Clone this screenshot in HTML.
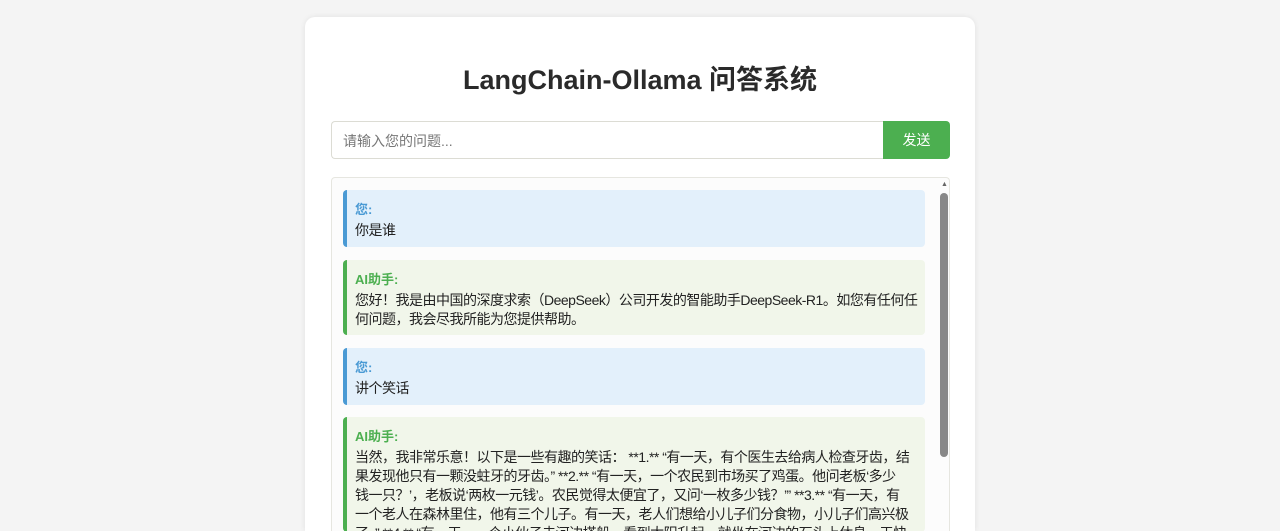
<!DOCTYPE html>
<html><head><meta charset="utf-8"><style>
*{box-sizing:border-box;margin:0;padding:0}
html,body{width:1280px;height:531px;overflow:hidden}
body{position:relative;background:#f4f4f4;font-family:"Liberation Sans","Noto Sans CJK SC",sans-serif;color:#222}
.card{position:absolute;left:305px;top:17px;width:670px;height:514px;background:#fff;border-radius:10px 10px 0 0;box-shadow:0 0 6px rgba(0,0,0,.08);overflow:hidden}
h1{position:absolute;left:0;right:0;top:45px;text-align:center;font-size:27px;font-weight:bold;color:#2a2a2a;line-height:36px}
.inp{position:absolute;left:26px;top:104px;width:553px;height:38px;border:1px solid #dcdcd4;border-right:none;border-radius:4px 0 0 4px;font-size:14px;color:#777;padding:9px 11px}
.btn{position:absolute;left:578px;top:104px;width:67px;height:38px;background:#4caf50;color:#fff;border-radius:0 4px 4px 0;font-size:14px;text-align:center;line-height:38px}
.chat{position:absolute;left:26px;top:160px;width:619px;height:354px;border:1px solid #e6e6e0;border-bottom:none;border-radius:4px 4px 0 0;background:#fcfcfc;overflow:hidden}
.msg{position:absolute;left:11px;width:582px;border-radius:4px;padding:9px 6px 0 8px;font-size:14px;line-height:19px;letter-spacing:-0.5px;white-space:nowrap;overflow:hidden}
.u{background:#e3f0fb;border-left:4px solid #4a9ad4}
.a{background:#f1f6ea;border-left:4px solid #4caf50}
.lab{font-size:13px;font-weight:bold;line-height:22px;letter-spacing:0}
.u .lab{color:#4a9ad4}.a .lab{color:#4caf50}
.sb{position:absolute;left:608px;top:15px;width:8px;height:264px;background:#888;border-radius:4px}
.arr{position:absolute;left:609px;top:3px;font-size:7px;color:#666}
</style></head><body>
<div class="card">
<h1>LangChain-Ollama 问答系统</h1>
<div class="inp">请输入您的问题...</div>
<div class="btn">发送</div>
<div class="chat">
<div class="arr">▲</div>
<div class="sb"></div>
<div class="msg u" style="top:12px;height:57px"><div class="lab">您:</div>你是谁</div>
<div class="msg a" style="top:82px;height:75px"><div class="lab">AI助手:</div>您好！我是由中国的深度求索（DeepSeek）公司开发的智能助手DeepSeek-R1。如您有任何任<br>何问题，我会尽我所能为您提供帮助。</div>
<div class="msg u" style="top:170px;height:57px"><div class="lab">您:</div>讲个笑话</div>
<div class="msg a" style="top:239px;height:115px"><div class="lab">AI助手:</div>当然，我非常乐意！以下是一些有趣的笑话： **1.** “有一天，有个医生去给病人检查牙齿，结<br>果发现他只有一颗没蛀牙的牙齿。” **2.** “有一天，一个农民到市场买了鸡蛋。他问老板‘多少<br>钱一只？’，老板说‘两枚一元钱’。农民觉得太便宜了，又问‘一枚多少钱？’” **3.** “有一天，有<br>一个老人在森林里住，他有三个儿子。有一天，老人们想给小儿子们分食物，小儿子们高兴极<br>了。” **4.** “有一天，一个小伙子去河边搭船，看到太阳升起，就坐在河边的石头上休息，天快</div>
</div>
</div>
</body></html>
